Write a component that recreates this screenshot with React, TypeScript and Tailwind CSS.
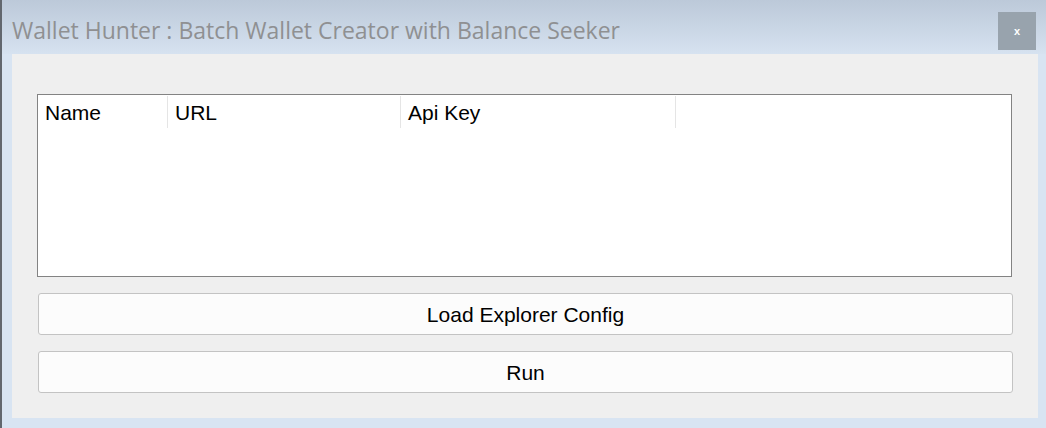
export default function App() {
  const columns = [
    { label: 'Name', width: 'w-[130px]' },
    { label: 'URL', width: 'w-[233px]' },
    { label: 'Api Key', width: 'w-[275px]' },
  ];

  return (
    <div className="flex h-[428px] w-[1046px] flex-col overflow-hidden border-l-2 border-[#62676e] bg-[#d8e4f2]">
      {/* Title bar */}
      <div className="flex h-[54px] shrink-0 items-start justify-between bg-gradient-to-b from-[#bcc9d9] to-[#d6e2f0] pl-[10px] pr-[10px]">
        <h1 className="mt-[16px] font-['Open_Sans',sans-serif] text-[23px] leading-[28px] text-[#8f9092]">
          Wallet Hunter : Batch Wallet Creator with Balance Seeker
        </h1>
        <button className="mt-[12px] flex h-[38px] w-[38px] items-center justify-center bg-[#98a3ad] font-['Liberation_Sans',sans-serif] text-[11px] font-bold text-white">
          x
        </button>
      </div>

      {/* Content panel */}
      <div className="ml-[10px] mr-[8px] flex h-[364px] flex-col bg-[#efefef] pl-[25px] pr-[26px] pt-[40px] font-['Liberation_Sans',Arial,sans-serif] text-[21px] text-black">
        <div className="h-[183px] w-[975px] shrink-0 border border-[#838383] bg-white">
          <div className="flex h-[33px] items-stretch pt-[1px]">
            {columns.map((col) => (
              <div
                key={col.label}
                className={`${col.width} flex items-center border-r border-[#e5e5e5] pl-[7px] leading-none`}
              >
                {col.label}
              </div>
            ))}
          </div>
        </div>

        <button className="ml-[1px] mt-[16px] h-[42px] w-[975px] shrink-0 rounded-[3px] border border-[#c3c3c3] bg-[#fcfcfc] leading-none">
          Load Explorer Config
        </button>
        <button className="ml-[1px] mt-[16px] h-[42px] w-[975px] shrink-0 rounded-[3px] border border-[#c3c3c3] bg-[#fcfcfc] leading-none">
          Run
        </button>
      </div>
    </div>
  );
}
